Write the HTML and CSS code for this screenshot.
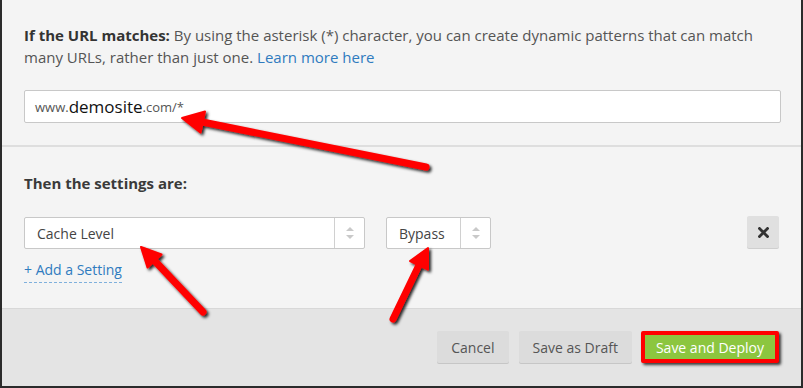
FILE: index.html
```html
<!DOCTYPE html>
<html lang="en">
<head>
<meta charset="utf-8">
<title>Page Rule</title>
<link rel="stylesheet" href="styles.css">
</head>
<body>
<div class="modal">
  <section class="match">
    <p class="intro"><strong>If the URL matches:</strong> By using the asterisk (*) character, you can create dynamic patterns that can match many URLs, rather than just one. <a href="#" class="link">Learn more here</a></p>
    <div class="url-input"><span class="muted">www.</span><span class="host">demosite</span><span class="muted">.com/*</span></div>
  </section>
  <section class="settings">
    <h3 class="settings-title">Then the settings are:</h3>
    <div class="setting-row">
      <div class="select select-wide">
        <span class="select-value">Cache Level</span>
        <span class="select-arrows"><svg width="8" height="12" viewBox="0 0 8 12"><path d="M4 0 L8 4 L0 4 Z M0 8 L8 8 L4 12 Z" fill="#c9c9c9"/></svg></span>
      </div>
      <div class="select select-narrow">
        <span class="select-value">Bypass</span>
        <span class="select-arrows"><svg width="8" height="12" viewBox="0 0 8 12"><path d="M4 0 L8 4 L0 4 Z M0 8 L8 8 L4 12 Z" fill="#c9c9c9"/></svg></span>
      </div>
      <button class="remove" type="button"><svg width="11" height="11" viewBox="0 0 11 11"><path d="M1.5 1.5 L9.5 9.5 M9.5 1.5 L1.5 9.5" stroke="#333" stroke-width="2.8" stroke-linecap="square"/></svg></button>
    </div>
    <a href="#" class="add-setting">+ Add a Setting</a>
  </section>
  <footer class="actions">
    <button class="btn" type="button">Cancel</button>
    <button class="btn" type="button">Save as Draft</button>
    <button class="btn btn-primary" type="button">Save and Deploy</button>
  </footer>
  <svg class="annotations" width="799" height="386" viewBox="2 0 799 386">
    <defs>
      <filter id="shadow" x="-20%" y="-20%" width="140%" height="140%">
        <feDropShadow dx="2" dy="2" stdDeviation="1.6" flood-color="#000" flood-opacity="0.85"/>
      </filter>
    </defs>
    <g filter="url(#shadow)" fill="#ff0000" stroke="#ff0000">
      <line x1="426" y1="167" x2="200" y2="121.5" stroke-width="7" stroke-linecap="round"/>
      <polygon points="182,118 205,111.5 200.5,132.5" stroke-width="2" stroke-linejoin="round"/>
      <line x1="203" y1="312" x2="152" y2="258" stroke-width="7" stroke-linecap="round"/>
      <polygon points="141,247 161.5,254.5 147.5,267.5" stroke-width="2" stroke-linejoin="round"/>
      <line x1="393" y1="319" x2="420" y2="263" stroke-width="7" stroke-linecap="round"/>
      <polygon points="428,248 428,269.5 410,261" stroke-width="2" stroke-linejoin="round"/>
    </g>
  </svg>
</div>
</body>
</html>
```

FILE: styles.css
```css
html, body {
  margin: 0;
  padding: 0;
}

body {
  background: #2b2b2b;
  font-family: "Open Sans", "Noto Sans", sans-serif;
  font-size: 14px;
  color: #555;
}

.modal {
  position: relative;
  margin-left: 2px;
  width: 799px;
  height: 386px;
  background: #f4f4f4;
  overflow: hidden;
  display: flex;
  flex-direction: column;
}

.match {
  padding: 24px 20px 22px 22px;
  border-bottom: 2px solid #dedede;
}

.intro {
  margin: 0;
  font-size: 15px;
  line-height: 22px;
  color: #555;
}

.intro strong {
  color: #333;
  font-weight: 700;
}

.link {
  color: #2f7bbf;
  text-decoration: none;
}

.url-input {
  margin-top: 22px;
  height: 31px;
  box-sizing: content-box;
  border: 1px solid #c8c8c8;
  border-radius: 2px;
  background: #fff;
  padding: 0 10px;
  display: flex;
  align-items: center;
  color: #555;
}

.url-input .muted {
  font-size: 13px;
  color: #555;
}

.url-input .host {
  font-size: 17px;
  color: #111;
}

.settings {
  padding: 25px 22px 0 22px;
  flex: 1;
}

.settings-title {
  margin: 0;
  font-size: 15px;
  line-height: 22px;
  font-weight: 700;
  color: #3a3a3a;
}

.setting-row {
  margin-top: 23px;
  display: flex;
  align-items: flex-start;
}

.select {
  height: 30px;
  border: 1px solid #c8c8c8;
  border-radius: 2px;
  background: #fff;
  display: flex;
  align-items: stretch;
  color: #444;
}

.select-wide {
  width: 339px;
}

.select-narrow {
  width: 103px;
  margin-left: 21px;
}

.select-value {
  flex: 1;
  padding-left: 12px;
  display: flex;
  align-items: center;
  font-size: 14px;
}

.select-arrows {
  width: 29px;
  border-left: 1px solid #d0d0d0;
  display: flex;
  align-items: center;
  justify-content: center;
}

.remove {
  margin-left: auto;
  margin-top: -1px;
  width: 32px;
  height: 32px;
  border: 0;
  border-radius: 2px;
  background: #e0e0e0;
  box-shadow: 0 1px 0 #cfcfcf;
  display: flex;
  align-items: center;
  justify-content: center;
  padding: 0;
}

.add-setting {
  display: inline-block;
  margin-top: 11px;
  font-size: 14px;
  line-height: 20px;
  color: #2f7bbf;
  text-decoration: none;
  padding-bottom: 2px;
  border-bottom: 1px dashed #7fb0dc;
}

.actions {
  height: 78px;
  background: #e4e4e4;
  border-top: 1px solid #d8d8d8;
  box-sizing: border-box;
  display: flex;
  justify-content: flex-end;
  align-items: flex-start;
  gap: 10px;
  padding: 22px 22px 0 0;
}

.btn {
  height: 32px;
  border: 0;
  border-radius: 2px;
  background: #dcdcdc;
  box-shadow: 0 1px 0 #c6c6c6;
  font-family: "Open Sans", "Noto Sans", sans-serif;
  font-size: 14px;
  color: #555;
  padding: 0 14px;
}

.btn-primary {
  background: #8cc63f;
  color: #fff;
  border: 4px solid #ff0000;
  box-sizing: border-box;
  padding: 0 11px;
  margin-left: -1px;
  box-shadow: 2px 2px 3px rgba(0, 0, 0, 0.75);
}

.annotations {
  position: absolute;
  top: 0;
  left: 0;
  pointer-events: none;
}
```
